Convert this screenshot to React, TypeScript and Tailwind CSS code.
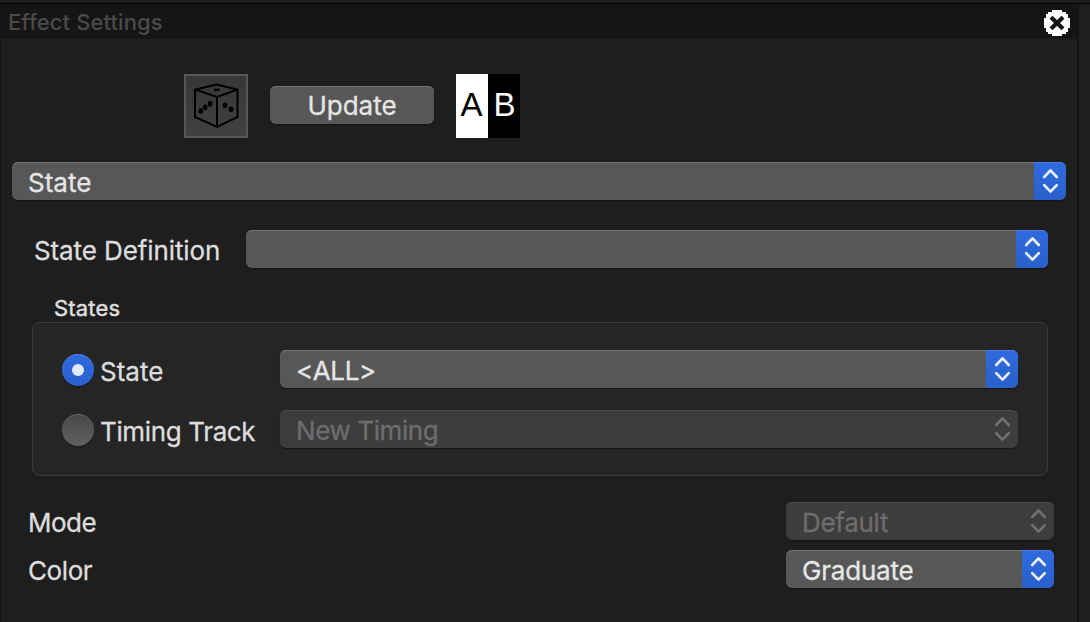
import React from "react";

function Chevrons({ muted = false }: { muted?: boolean }) {
  return (
    <svg width="32" height="38" viewBox="0 0 32 38" fill="none" stroke={muted ? "#717171" : "#f0f4fd"} strokeWidth="2.6" strokeLinecap="round" strokeLinejoin="round">
      <path d="M10.2 15 16.5 8.4 22.8 15M10.2 23.2 16.5 29.6 22.8 23.2" />
    </svg>
  );
}

function Select({ label, className, textClass = "", disabled = false }: { label: string; className: string; textClass?: string; disabled?: boolean }) {
  return (
    <button
      disabled={disabled}
      className={
        "flex h-[38px] shrink-0 overflow-hidden rounded-[6px] text-left " +
        (disabled
          ? "bg-[#3d3d3d] text-[#6d6d6d] shadow-[inset_0_1px_0_#4b4b4b,0_1px_1px_#151515] "
          : "bg-[#575757] text-[#e6e6e6] shadow-[inset_0_1px_0_#777777,0_1px_1px_#151515] ") +
        className
      }
    >
      <span className={"flex-1 whitespace-nowrap pt-[3px] pl-4 text-[26px] leading-[36px] " + textClass}>{label}</span>
      <span className={disabled ? "h-[38px] w-8" : "h-[38px] w-8 bg-linear-to-b from-[#2f6ae0] to-[#2a60cb] shadow-[inset_0_1px_0_#4c80e8]"}>
        <Chevrons muted={disabled} />
      </span>
    </button>
  );
}

function Dice() {
  return (
    <svg width="60" height="60" viewBox="0 0 60 60" fill="none" stroke="#000" strokeWidth="2">
      <path d="M30.5 8.5 51.5 13.5V41L31 50.8 9 41V13.5ZM9 13.5 31 21 51.5 13.5M31 21V51" />
      <g fill="#000" stroke="none">
        <ellipse cx="30.8" cy="13.8" rx="3.2" ry="1.2" />
        <ellipse cx="24" cy="27.8" rx="2.3" ry="3" />
        <ellipse cx="19.2" cy="31.4" rx="2.3" ry="2.8" />
        <ellipse cx="14.7" cy="34.9" rx="2.3" ry="3" />
        <ellipse cx="39" cy="29.2" rx="2.4" ry="2.8" />
        <ellipse cx="45" cy="33.2" rx="2.4" ry="2.8" />
      </g>
    </svg>
  );
}

export default function App() {
  return (
    <div className="flex h-[622px] w-[1090px] flex-col overflow-hidden bg-[#1e1e1e] pt-[3px] font-['Inter',sans-serif] text-[#dddddd] [-webkit-text-stroke:0.3px_currentColor]">
      <div className="h-px shrink-0 bg-black" />
      <div className="flex flex-1">
        <main className="flex w-[1079px] flex-col border-r-2 border-l border-r-[#131313] border-l-[#151515]">
          <header className="flex h-[35px] shrink-0 items-center justify-between bg-[#151515] pr-[7px] pl-[7px]">
            <h1 className="text-[22px] leading-[34px] font-medium tracking-[0.1px] text-[#4a4a4a] [-webkit-text-stroke:0]">Effect Settings</h1>
            <button aria-label="Close" className="mt-[3px]">
              <svg width="26" height="26" viewBox="0 0 26 26">
                <path shapeRendering="crispEdges" fill="#fff" d="M8 0h10v2h4v2h2v4h2v10h-2v4h-2v2h-4v2H8v-2H4v-2H2v-4H0V8h2V4h2V2h4z" />
                <path stroke="#151515" strokeWidth="4.2" d="M7 7.2 19 18.8M19 7.2 7 18.8" />
              </svg>
            </button>
          </header>

          <div className="mt-[35px] ml-[183px] flex h-16 shrink-0 items-center">
            <button aria-label="Randomize" className="size-16 border-2 border-[#575757] bg-linear-to-b from-[#373737] to-[#414141]">
              <Dice />
            </button>
            <button className="mt-[-2px] ml-[22px] h-[38px] w-[164px] rounded-[6px] bg-[#575757] pt-px text-[26px] leading-[36px] text-[#e6e6e6] shadow-[inset_0_1px_0_#777777,0_1px_1px_#151515]">
              Update
            </button>
            <div className="ml-[22px] flex h-16 w-16 font-['Liberation_Sans',sans-serif] text-[33px] leading-[62px] [-webkit-text-stroke:0]">
              <span className="w-8 bg-white pr-px text-center text-black">A</span>
              <span className="w-8 bg-black pl-px text-center text-white">B</span>
            </div>
          </div>

          <Select label="State" className="mt-6 ml-[11px] w-[1054px]" />

          <div className="mt-[30px] ml-[33px] flex h-[38px] shrink-0">
            <span className="w-[212px] pt-[3px] text-[26px] leading-[36px] tracking-[-0.1px] whitespace-nowrap">State Definition</span>
            <Select label="" className="w-[802px]" />
          </div>

          <section className="mt-[26px] ml-[31px] w-[1016px] shrink-0">
            <h2 className="h-7 pl-[22px] text-[22px] leading-[29px] tracking-[0.2px] [-webkit-text-stroke:0.5px_currentColor]">States</h2>
            <div className="h-[154px] rounded-[8px] border border-[#3d3d3d] bg-[#252525] pt-[27px] pl-[29px]">
              <div className="flex h-[38px] items-center">
                <span className="mt-[2px] flex size-8 items-center justify-center rounded-full bg-linear-to-b from-[#2f6ae0] to-[#2a60cb] shadow-[inset_0_1px_0_#4c80e8,0_1px_1px_#151515]">
                  <span className="size-3 rounded-full bg-[#e2ebfb]" />
                </span>
                <span className="w-[186px] pt-[5px] pl-[6px] text-[26px] leading-[36px]">State</span>
                <Select label="<ALL>" className="w-[738px]" textClass="tracking-[-0.4px]" />
              </div>
              <div className="mt-[22px] flex h-[38px] items-center">
                <span className="mt-[2px] size-8 rounded-full bg-linear-to-b from-[#484848] to-[#606060] shadow-[inset_0_1px_0_#626262,0_1px_1px_#151515]" />
                <span className="w-[186px] pt-[5px] pl-[6px] text-[26px] leading-[36px] tracking-[-0.36px] whitespace-nowrap">Timing Track</span>
                <Select label="New Timing" disabled className="w-[738px]" textClass="tracking-[-0.4px]" />
              </div>
            </div>
          </section>

          <div className="mt-[26px] mr-[23px] ml-[27px] flex h-[38px] shrink-0 justify-between">
            <span className="pt-[3px] text-[26px] leading-[36px] tracking-[-0.5px]">Mode</span>
            <Select label="Default" disabled className="w-[268px]" textClass="tracking-[-0.3px]" />
          </div>
          <div className="mt-[10px] mr-[23px] ml-[27px] flex h-[38px] shrink-0 justify-between">
            <span className="pt-[3px] text-[26px] leading-[36px] tracking-[-0.4px]">Color</span>
            <Select label="Graduate" className="w-[268px]" textClass="tracking-[-0.2px]" />
          </div>
        </main>
      </div>
    </div>
  );
}
